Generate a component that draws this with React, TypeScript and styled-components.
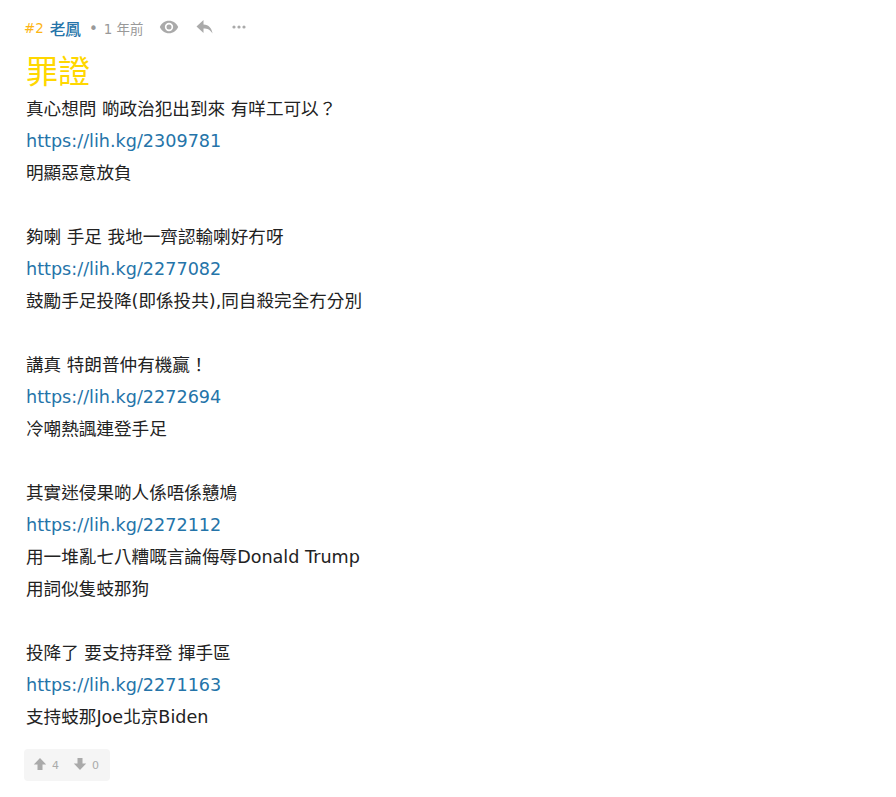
import React from 'react';
import styled, { createGlobalStyle } from 'styled-components';

const Global = createGlobalStyle`
  html, body { margin: 0; padding: 0; background: #fff; }
  body { font-family: "DejaVu Sans", "Noto Sans CJK TC", sans-serif; }
`;
const Post = styled.div`
  width: 896px; height: 797px; box-sizing: border-box; padding: 16px 24px 0; overflow: hidden;
`;
const Header = styled.div`
  display: flex; align-items: center; height: 24px; font-size: 13.4px;
`;
const Num = styled.span` color: #fdb515; margin-right: 6px; `;
const Name = styled.span` color: #2574a9; font-size: 15.6px; font-weight: 500; `;
const Dot = styled.span` color: #999; margin: 1px 6px 0 8px; font-size: 15px; `;
const Time = styled.span` color: #999; font-size: 13.4px; `;
const Icons = styled.div` display: flex; align-items: center; margin: -3px 0 0 16px; color: #aaa; `;
const EyeSlot = styled.span` display: flex; width: 37px; `;
const ReplySlot = styled.span` display: flex; width: 36px; `;
const Body = styled.div` padding: 11px 2px 0; color: #222; font-size: 17.6px; line-height: 32px; height: 698px;`;
const Title = styled.div` color: #ffd700; font-size: 32px; line-height: 42px; height: 42px; `;
const Line = styled.div` height: 32px; `;
const Link = styled.a` color: #2574a9; text-decoration: none; `;
const Votes = styled.div`
  display: inline-flex; align-items: center; gap: 14px; background: #f5f5f5; border-radius: 4px;
  height: 32px; padding: 0 11px 0 9px; color: #aaa; font-size: 11px;
`;
const Vote = styled.span` display: inline-flex; align-items: center; gap: 5px; `;
const Glyph = styled.svg` margin-top: -3px; `;

const Eye = () => <svg width="20" height="20" viewBox="0 0 24 24" fill="currentColor"><path d="M12 4.500C7 4.500 2.700 7.600 1 12c1.700 4.400 6 7.500 11 7.500s9.300-3.100 11-7.500c-1.700-4.400-6-7.500-11-7.500zm0 12.500a5 5 0 1 1 0-10 5 5 0 0 1 0 10zm0-8a3 3 0 1 0 0 6 3 3 0 0 0 0-6z"/></svg>;
const Reply = () => <svg width="18" height="18" viewBox="0 0 18 18" fill="currentColor"><path d="M7.500 6.500V2L0.500 8.500l7 6.500v-4.500c4 0 6.800 1.300 9 5-.6-5-3.600-8.800-9-9z"/></svg>;
const More = () => <svg width="14" height="14" viewBox="0 0 14 14" fill="currentColor"><circle cx="2" cy="7" r="1.600"/><circle cx="7" cy="7" r="1.600"/><circle cx="12" cy="7" r="1.600"/></svg>;
const Up = () => <Glyph width="14" height="14" viewBox="0 0 14 14" fill="currentColor"><path d="M7 1 .8 7.500h3.700V13h5V7.500h3.700z"/></Glyph>;
const Down = () => <Glyph width="14" height="14" viewBox="0 0 14 14" fill="currentColor"><path d="M7 13 .8 6.500h3.700V1h5v5.500h3.700z"/></Glyph>;

const lines: (string | { href: string })[] = [
  '真心想問 啲政治犯出到來 有咩工可以？', { href: 'https://lih.kg/2309781' }, '明顯惡意放負', '',
  '夠喇 手足 我地一齊認輸喇好冇呀', { href: 'https://lih.kg/2277082' }, '鼓勵手足投降(即係投共),同自殺完全冇分別', '',
  '講真 特朗普仲有機贏！', { href: 'https://lih.kg/2272694' }, '冷嘲熱諷連登手足', '',
  '其實迷侵果啲人係唔係戇鳩', { href: 'https://lih.kg/2272112' }, '用一堆亂七八糟嘅言論侮辱Donald Trump', '用詞似隻蚑那狗', '',
  '投降了 要支持拜登 揮手區', { href: 'https://lih.kg/2271163' }, '支持蚑那Joe北京Biden',
];

export default function App() {
  return (
    <Post>
      <Global />
      <Header>
        <Num>#2</Num><Name>老鳳</Name><Dot>•</Dot><Time>1 年前</Time>
        <Icons><EyeSlot><Eye /></EyeSlot><ReplySlot><Reply /></ReplySlot><More /></Icons>
      </Header>
      <Body>
        <Title>罪證</Title>
        {lines.map((l, i) => (
          <Line key={i}>{typeof l === 'string' ? l : <Link href={l.href}>{l.href}</Link>}</Line>
        ))}
      </Body>
      <Votes>
        <Vote><Up />4</Vote>
        <Vote><Down />0</Vote>
      </Votes>
    </Post>
  );
}
